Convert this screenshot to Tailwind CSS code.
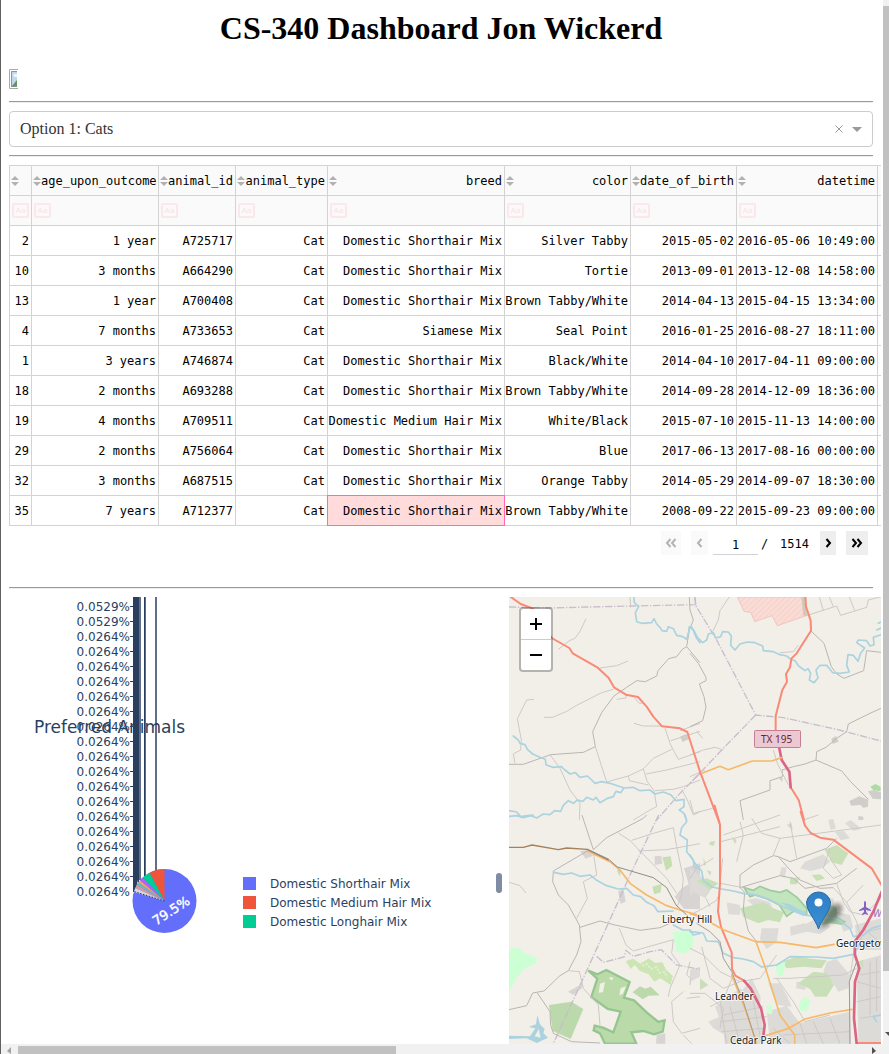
<!DOCTYPE html>
<html lang="en">
<head>
<meta charset="utf-8">
<meta name="viewport" content="width=device-width, initial-scale=1">
<title>CS-340 Dashboard</title>
<script src="https://cdn.jsdelivr.net/npm/@tailwindcss/browser@4"></script>
</head>
<body class="flex min-h-screen flex-col overflow-hidden border-l border-[#606060] bg-white font-['Liberation_Serif',serif] text-black">
<svg class="hidden">
  <symbol id="sort" viewBox="0 0 8 10"><path d="M4 0 8 4H0ZM0 6H8L4 10Z" fill="#b1b1b1"/></symbol>
</svg>
<div class="flex flex-1">
  <main class="flex min-w-0 flex-1 flex-col pl-2 pr-[10px]">
    <h1 class="mt-[10px] text-center text-[32px] leading-9 font-bold">CS-340 Dashboard Jon Wickerd</h1>
    <a href="#" aria-label="Home" class="mt-[23px] block w-[9px]">
      <svg width="9" height="20" viewBox="0 0 9 20"><path d="M9 .5H.5V19.500H9" fill="none" stroke="#a9a9a9"/><path d="M2 2H8V18H2Z" fill="#bfd7f1"/><path d="M2.500 18V2.500H8" fill="none" stroke="#8d969f"/><path d="M4 5h4v3H5z" fill="#edf5fc"/><path d="M3 17 8 11V17Z" fill="#5d9a4c"/><path d="M2 17.500H8" fill="none" stroke="#87938a"/></svg>
    </a>
    <hr class="mt-3 h-[2px] border-t border-b border-t-[#9a9a9a] border-b-[#eeeeee]">
    <div class="mt-2 flex h-9 items-center rounded border border-[#cccccc] pr-2 pl-[10px]">
      <button class="flex-1 text-left text-base leading-none text-[#333333]" aria-haspopup="listbox">Option 1: Cats</button>
      <button aria-label="Clear" class="mr-2 p-0"><svg width="10" height="10" viewBox="0 0 10 10"><path d="M1.500 1.500 8.500 8.500M8.500 1.500 1.500 8.500" stroke="#999" fill="none"/></svg></button>
      <button aria-label="Open" class="mr-[2px]"><svg width="10" height="5" viewBox="0 0 10 5"><path d="M0 0H10L5 5Z" fill="#999"/></svg></button>
    </div>
    <hr class="mt-2 h-[2px] border-t border-b border-t-[#9a9a9a] border-b-[#eeeeee]">
    <div class="mt-2 -mr-2 overflow-hidden">
      <table class="w-[996px] table-fixed border-collapse font-['DejaVu_Sans_Mono',monospace] text-[12px] leading-none whitespace-nowrap">
        <colgroup><col class="w-[22px]"><col class="w-[127px]"><col class="w-[77px]"><col class="w-[92px]"><col class="w-[177px]"><col class="w-[126px]"><col class="w-[106px]"><col class="w-[141px]"><col class="w-[128px]"></colgroup>
        <thead id="head" class="bg-[#fafafa]"></thead>
        <tbody id="rows"></tbody>
      </table>
    </div>
    <nav aria-label="Pages" class="mt-[5px] mr-[5px] flex h-6 items-center justify-end font-['DejaVu_Sans_Mono',monospace] text-[12px] leading-none">
      <button disabled aria-label="First page" class="mr-[10px] flex h-6 w-5 items-center justify-center bg-[#fafafa]"><svg width="12" height="10" viewBox="0 0 12 10"><path d="M5.500 1 2 5 5.500 9M10.500 1 7 5 10.500 9" fill="none" stroke="#b3b3b3" stroke-width="2"/></svg></button>
      <button disabled aria-label="Previous page" class="mr-[5px] flex h-6 w-[17px] items-center justify-center bg-[#fafafa]"><svg width="7" height="10" viewBox="0 0 7 10"><path d="M5.500 1 2 5 5.500 9" fill="none" stroke="#b3b3b3" stroke-width="2"/></svg></button>
      <input aria-label="Page" value="1" class="h-6 w-[45px] border-b border-[#d3d3d3] pt-[5px] text-center outline-none">
      <span class="ml-[3px] w-[19px] pt-[2px]">/</span><span class="mr-[11px] pt-[2px]">1514</span>
      <button aria-label="Next page" class="mr-[10px] flex h-6 w-4 items-center justify-center bg-[#eeeeee]"><svg width="7" height="10" viewBox="0 0 7 10"><path d="M1.500 1 5 5 1.500 9" fill="none" stroke="#000" stroke-width="2"/></svg></button>
      <button aria-label="Last page" class="flex h-6 w-[22px] items-center justify-center bg-[#eeeeee]"><svg width="12" height="10" viewBox="0 0 12 10"><path d="M1.500 1 5 5 1.500 9M6.500 1 10 5 6.500 9" fill="none" stroke="#000" stroke-width="2"/></svg></button>
    </nav>
    <hr class="mt-8 h-[2px] border-t border-b border-t-[#9a9a9a] border-b-[#eeeeee]">
    <div class="mt-2 -mr-2 flex flex-1">
      <section class="w-[500px] shrink-0" aria-label="Preferred Animals">
        <svg width="500" height="447" viewBox="9 597 500 447" class="font-['DejaVu_Sans',sans-serif]" fill="#2a3f5f">
          <g id="ticks" font-size="12" text-anchor="end"></g>
          <path d="M133 597H138V880L135 892H133Z"/>
          <path d="M140 597V880M145 597V876M156 597V871" fill="none" stroke="#5f6f87" stroke-width="2"/>
          <path d="M138.500 597V882M144.500 597V876" fill="none" stroke="#2a3f5f" stroke-width="1"/>
          <circle cx="164.500" cy="901" r="32" fill="#636efa"/>
          <path d="M164.500 901V869A32 32 0 0 0 149.500 872.700Z" fill="#ef553b"/>
          <path d="M164.500 901 149.500 872.700A32 32 0 0 0 142.700 877.600Z" fill="#00cc96"/>
          <path d="M164.500 901 142.700 877.600 140 880.400Z" fill="#ab63fa"/>
          <path d="M164.500 901 140 880.400 138.300 882.600Z" fill="#ffa15a"/>
          <path d="M164.500 901 138.300 882.600 136.800 885Z" fill="#6fb5c5"/>
          <path d="M164.500 901 136.800 885 135.300 888Z" fill="#d29a9a"/>
          <path d="M164.500 901 135.300 888 133.800 892.100Z" fill="#d9d3dd"/>
          <path d="M164.500 901 134 891.500" stroke="#2a3f5f" stroke-dasharray="1.500 1.500"/>
          <text x="0" y="0" transform="translate(173.500 914.500) rotate(-33)" font-size="13" text-anchor="middle" fill="#fff" stroke="#fff" stroke-width=".4">79.5%</text>
          <text x="34" y="733" font-size="17">Preferred Animals</text>
          <path d="M243 877h13v13h-13z" fill="#636efa"/><path d="M243 896h13v13h-13z" fill="#ef553b"/><path d="M243 915h13v13h-13z" fill="#00cc96"/>
          <g font-size="12"><text x="270" y="888">Domestic Shorthair Mix</text><text x="270" y="907">Domestic Medium Hair Mix</text><text x="270" y="926">Domestic Longhair Mix</text></g>
          <rect x="496" y="873" width="6" height="20" rx="3" fill="#808ba4"/>
        </svg>
      </section>
      <section class="relative h-[447px] min-w-0 flex-1 overflow-hidden bg-[#f2efe9]" aria-label="Map">
        <svg class="block size-full font-['Noto_Sans',sans-serif]" viewBox="509 597 372 447" preserveAspectRatio="xMinYMin slice">
          <defs><pattern id="hatch" width="12" height="12" patternUnits="userSpaceOnUse" patternTransform="rotate(45)"><path d="M0 0V12" stroke="#f5c6bf" stroke-width="3"/></pattern>
          <linearGradient id="pin" x1="0" y1="0" x2="0" y2="1"><stop offset="0" stop-color="#2e7fc6"/><stop offset="1" stop-color="#3b8fd2"/></linearGradient>
          <filter id="soft"><feGaussianBlur stdDeviation="2"/></filter></defs>
          <!-- land cover -->
          <g transform="translate(690 590) scale(.33333)">
            <path d="M142 21H342L346 78 262 107 246 77 194 95 183 68 162 64Z" fill="#f8dcd5"/><path d="M142 21H342L346 78 262 107 246 77 194 95 183 68 162 64Z" fill="url(#hatch)" stroke="#f2b5ae" stroke-width="2"/>
            <path d="M334 21H346L351 76 340 79Z" fill="#cfcab8"/>
            <path d="M478 633 508 619 535 629 534 650 520 654 512 645 483 647ZM534 604 552 600 573 607V628L548 626ZM505 678 520 680V690H505ZM424 446 438 438 446 455 428 462ZM266 560 278 565 276 577Z" fill="#d0cecb"/>
            <path d="M541 590 556 582 572 590V604L550 600Z" fill="#addba2"/>
          </g>
          <path transform="translate(500 590) scale(.33333)" d="M540 440 558 432 568 446 548 456Z" fill="#d0cecb"/>
          <g transform="translate(500 815) scale(.33333)">
            <path d="M27 401 54 397 70 411 113 431 108 445 72 462 50 490 27 530Z" fill="#cdffd5"/>
            <path d="M518 352 576 345 580 368 578 400 552 416 528 410Z" fill="#cdffd5"/>
            <path d="M147 570 214 560 250 582 212 672 158 648Z" fill="#bbd9ab"/>
            <path d="M265 467 292 478 319 465 389 501 372 548 402 556 440 592 475 621 494 616 488 650 462 658 430 648 394 652 409 686H315L300 655 281 646 284 632 309 638 340 652 362 590 323 582 274 546 292 491Z" fill="#badaaa" stroke="#96c68f" stroke-width="7"/>
            <path d="M300 506 315 501 309 532 296 533ZM362 519 378 514 369 536 358 541ZM330 486l10 3-3 7-9-4Z" fill="#eef1e4"/>
            <path d="M398 532 420 514 436 521 452 515 479 541 446 542 428 553Z" fill="#bbd9ab"/>
            <path d="M377 438 400 431 421 446 446 430 466 444 487 441 497 463 519 483 512 510 481 490 463 500 446 478 420 468 404 450 392 462Z" fill="#cbe6b4"/>
            <path d="M420 440 430 452 440 446 452 462 470 456 478 474 494 470 500 488" fill="none" stroke="#e6eed6" stroke-width="5" stroke-dasharray="7 5"/>
            <path d="M487 127 512 124 517 152 498 167ZM457 215 485 207 482 232 463 238ZM350 165 363 163 360 185Z" fill="#c5dfb2"/>
            <path d="M552 160 600 145V282H552L524 245 545 220 566 208ZM464 124 484 122 487 146 464 150ZM354 230 370 220 377 260 362 266ZM204 530 236 512 246 502 246 520 220 540ZM240 109 260 105 280 122 257 131ZM470 660 496 655V686H468Z" fill="#d9d4d4"/>
          </g>
          <g transform="translate(690 815) scale(.33333)">
            <g fill="#dddbd7">
              <path d="M0 160 22 176 50 196 62 225 46 250 10 230 0 245ZM415 15 430 12 438 40 422 46ZM465 25 482 15 515 42 490 48ZM435 50 462 48 480 70 452 76ZM345 140 400 118 420 140 395 160 362 168 330 160ZM275 156 290 158 284 188 268 180ZM110 262 150 270 150 300 115 298ZM170 255 200 250 240 262 250 285 220 280 195 275ZM300 335 345 324 349 350 302 362ZM345 328 400 300 420 336 390 358 340 348ZM215 340 266 340 260 380 230 402 210 372ZM360 245 430 250 440 310 400 330ZM410 440 440 432 480 480 475 520 445 530 430 505 400 470ZM235 505 268 505 290 540 305 575 262 570ZM320 500 350 505 345 525 318 520Z"/>
              <path d="M75 575 150 520 190 560 215 600 222 686H104L100 640ZM150 535 185 490 212 545 208 600ZM230 590 290 572 330 625 480 590V686H240ZM500 440 573 420V686H505ZM440 290 480 300 490 340 460 350ZM495 330 573 310V405H500ZM0 465 30 455 30 485 0 500ZM55 620 100 600 105 660 70 640Z"/>
            </g>
            <g fill="#c9dfb7"><path d="M404 104 440 90 475 115 455 150 425 142ZM150 280 190 270 220 262 250 280 282 292 270 322 235 315 205 325 160 306ZM275 440 320 425 370 432 410 436 395 460 340 455 290 460ZM325 505 370 470 412 475 432 510 410 545 375 545 360 522ZM20 196 50 190 85 205 60 225ZM300 190 330 186 320 208 300 208ZM505 440 520 435 520 460ZM30 490 55 510 30 525Z"/></g>
            <path d="M256 446 286 440 280 480 262 486ZM326 566 345 543 362 560 350 590 330 586ZM230 570 248 568 246 598 230 595Z" fill="#cdffd5"/>
            <path d="M162 218 190 226 210 214 240 226 270 232 290 225 322 248 350 280 350 298 318 284 290 304 268 270 232 252 196 240 180 245Z" fill="#c2e5bd" stroke="#9fcaa1" stroke-width="5"/>
            <path d="M405 262 440 278 442 305 470 320 455 330 420 325 395 330Z" fill="#a7cca7"/>
            <path d="M272 262 300 268 325 282 350 292 345 304 315 292Z" fill="#a9d5db"/>
            <path d="M60 80 75 78 72 92 58 90ZM125 66 140 75 135 88ZM40 125 48 150 42 152ZM290 30 305 25 308 45ZM365 180 390 178 405 190 380 198ZM50 165 64 170 60 182Z" fill="#c9dfb7"/>
          </g>
          <!-- administrative boundaries -->
          <g fill="none" stroke="#c9bccd" stroke-width="4" stroke-dasharray="22 5 4 5">
            <path transform="translate(500 590) scale(.33333)" d="M27 51 140 54 400 48 587 44M600 550 540 610 470 690M587 44 585 21"/>
            <path transform="translate(690 590) scale(.33333)" d="M14 21 18 48 80 150 197 375 280 383 440 418 573 453M197 375 100 475 0 580"/>
            <path transform="translate(500 815) scale(.33333)" d="M476 0 390 180 325 325 245 500 158 690M290 424 310 442 372 426 378 406 400 424 450 410 484 404 530 450 600 463"/>
          </g>
          <!-- minor roads -->
          <g fill="none" stroke="#cdc9c6" stroke-width="3" stroke-linejoin="round">
            <g transform="translate(500 590) scale(.33333)">
              <path stroke="#bab5b4" d="M27 523 70 523 152 494 250 487 286 470 278 425 305 368 342 318 380 292 410 272 436 275 470 258 474 242 506 206 530 200 548 177 560 170 568 120 580 90 570 60 568 21M560 170 600 218"/>
              <path d="M258 86 240 124 225 145 208 152 175 178M384 213 350 227 300 234M340 298 305 308 230 346 200 364 158 382 132 382M102 328 80 330 52 386 64 450 62 480 40 492 45 520M286 470 320 576M150 494 180 535 210 600 240 640 238 690M402 400 430 408 490 408M495 415 512 465 535 508 600 485M512 452 600 424M320 576 385 558 430 537 460 505 515 478M430 537 442 575 462 602 470 650 450 660 400 690M438 552 500 540 600 515M385 558 388 572 445 585M465 602 520 598 550 590 600 570M545 598 562 630 580 675 600 665M540 422 600 400M404 324 418 340 426 340M350 328 378 324 378 312M390 21 392 52"/>
            </g>
            <g transform="translate(690 590) scale(.33333)">
              <path stroke="#bab5b4" d="M362 122 402 160 424 230 440 252 462 265 521 242 530 182 573 187M0 190 25 220 48 262 48 272 28 282 42 320 48 352 38 392 0 410M573 355 540 370 530 375 475 402 470 425 440 445 408 472 380 485 378 510 345 522 310 530 276 540M378 510 455 543 482 575 535 628M276 540 278 560 240 572 240 600 150 632 160 690"/>
              <path d="M118 21 90 62 85 90 68 125M270 188 310 185 325 165M346 78 440 48 452 76 530 52 535 30 573 20M400 62 388 21M430 50 418 21M495 64 478 21M0 495 40 480 75 472 100 480M0 630 10 670 68 655M250 480 262 520 295 585M340 690 385 675M0 560 45 540M20 424 38 445"/>
            </g>
            <g transform="translate(500 815) scale(.33333)">
              <path stroke="#bab5b4" d="M27 584 80 572 98 534 132 528 180 482 205 467 230 420 243 380 238 330 205 270 175 240 158 200 160 168 262 108M240 337 300 318 345 330 420 346 480 338 510 325M112 534 150 590 152 630 160 655 215 680 300 684M246 0 280 104 320 68 430 10 440 0"/>
              <path d="M355 54 392 78 420 108 500 190 530 235M395 76 460 55 520 38 530 95 550 190 545 240 530 280M280 110 290 180 250 200 262 250 230 310M27 202 60 212 78 234M358 340 378 390 400 408 520 374M520 374 515 415 540 450 510 520 505 545M205 467 238 470 250 520 295 570 300 630M550 530 515 560 520 620 545 655 600 640M415 108 500 104 600 86M570 440 560 480 572 490 570 510M560 550 600 545M550 660 575 686"/>
            </g>
            <g transform="translate(690 815) scale(.33333)">
              <path stroke="#bab5b4" d="M150 218 150 180 190 150 250 122 265 125 300 140 410 100 440 70M150 218 164 232 160 285 175 348 200 380M150 218 210 200 270 182 310 190 345 220 440 205 500 160M265 125 300 165 330 195 390 220 430 218"/>
              <path d="M100 60 190 28 270 0M185 10 215 55 270 70 573 30M92 80 270 35M250 120 270 70M98 130 90 205 150 216M140 140 160 60 150 20M300 20 320 130M0 190 20 160 70 130M0 300 40 280 80 256 84 245M48 250 60 275M0 400 40 420 90 470 150 500 210 490 260 420M130 480 100 555 60 575M35 395 60 490 100 520 150 500M430 218 470 262 500 320 520 400M440 205 460 260 480 290 520 300 573 250M470 262 520 210M250 490 300 490 460 480 500 460M0 535 45 535 100 580 90 640M260 490 310 560 345 620 420 600M480 686 478 500 495 390 530 350 573 340M500 500 573 520M500 560 573 545M510 610 573 600M510 480 570 470M540 440V600M560 430V590M100 600 220 575M90 620 230 605M95 650 220 640M120 575 150 686M90 555 110 686M190 560 215 686M510 380 573 390M520 340 573 385M250 640 300 686M330 625 350 686M370 620 400 686M420 610 450 686M280 660 480 650M420 130 440 160 455 180 430 190 400 160 420 100"/>
            </g>
          </g>
          <!-- water -->
          <g fill="none" stroke="#aad3df" stroke-width="5" stroke-linejoin="round" stroke-linecap="round">
            <path transform="translate(500 590) scale(.33333)" d="M402 21 403 38 416 50 406 68 410 95 425 100 455 98 462 86 470 102 480 112 486 122 500 124 505 110 520 116 530 136 548 140 560 148 566 125 568 110 576 112 590 145 600 158M40 438 55 450 60 460 75 464 82 478 98 492 120 502 136 508 138 524 158 532 184 530 195 540 210 552 226 548 240 562 262 558 275 570 285 580 305 575 330 580 348 586 372 594 400 592 420 602 450 600 465 612 490 606 512 614 528 632 552 628 552 650 538 660 552 670 560 690M27 662 50 666 62 680 90 676 110 684 130 672 150 674 164 662 182 664 190 646 205 632 220 640 232 630 248 634 260 622 280 630 288 622 300 638 320 626 340 620 348 604 362 608 372 594"/>
            <path transform="translate(690 590) scale(.33333)" d="M0 112 12 122 22 142 38 158 50 150 55 132 70 128 78 144 92 140 98 125 115 126 124 138 122 166 135 180 150 162 172 156 195 158 218 168 220 182 250 185 270 194 290 198 300 206 315 212 326 228 345 242 354 236 362 250 358 270 372 278 384 264 378 240 390 226 410 226 428 248 450 250 478 246 470 226 474 194 490 196 504 214 512 190 524 174 500 158 505 150 530 152 540 168 552 164 550 142 573 134M565 100 573 96M560 120 573 114"/>
            <path transform="translate(500 815) scale(.33333)" d="M27 4 50 2 70 8 100 0M555 0 560 20 545 38 540 60 562 75 560 110 580 135 582 156 600 162M162 172 190 178 215 174 240 184 270 180 290 196 320 212 355 222 380 220 400 240 422 245 440 262 462 272 474 290 520 288M520 330 548 345 570 345 580 360 600 355"/>
            <path transform="translate(690 815) scale(.33333)" d="M0 120 15 145 35 168 40 196 65 216 95 222 130 228 162 236 190 238 230 250 280 275 340 300 440 310 480 340 490 365 520 360 545 340 573 332M0 350 40 354 50 378 85 380 100 415 130 428 160 432 190 440 215 456 260 450 300 425 380 426 430 430 490 418 510 385M573 600 550 605 560 620"/>
          </g>
          <path transform="translate(500 815) scale(.33333)" d="M27 662 90 664 106 640 86 636 108 628 112 600 120 628 134 642 130 654 144 668 110 684 80 670 27 672ZM104 664 122 668 116 642Z" fill="#aad3df"/>
          <!-- highways -->
          <g fill="none" stroke-linejoin="round" stroke-linecap="round">
            <g stroke="#f98a76" stroke-width="6">
              <path transform="translate(500 590) scale(.33333)" d="M27 17 62 42 98 55 155 144 208 174 218 190 292 232 326 264 342 292 378 314 414 321 440 350 460 380 486 409 540 415 562 426 600 545 658 698"/>
              <path transform="translate(690 590) scale(.33333)" d="M346 17 348 50 362 92 363 122 320 190 304 206 300 232 288 252 291 275 277 300 257 378 257 422M302 592 326 630 342 690"/>
              <path transform="translate(690 815) scale(.33333)" d="M74 -28 90 30 90 205 84 290 93 336 125 412 126 462 136 482 162 497M332 -10 345 32 362 54 390 68 430 74 545 160 573 208M500 684H573"/>
            </g>
            <g stroke="#dc6485" stroke-width="8">
              <path transform="translate(690 590) scale(.33333)" d="M267 470 275 510 298 545 302 592"/>
              <path transform="translate(690 815) scale(.33333)" d="M162 497 182 520 213 580 224 630 220 664M575 230 550 290 520 345 494 380 495 420 508 460 495 500 492 610 500 686"/>
            </g>
            <g stroke="#f8b869" stroke-width="5">
              <path transform="translate(690 590) scale(.33333)" d="M38 549 90 529 115 539 187 513 245 513 275 503"/>
              <path transform="translate(500 815) scale(.33333)" d="M262 108 330 140 360 165 390 205 440 240 500 272 540 285 600 302"/>
              <path transform="translate(690 815) scale(.33333)" d="M0 294 60 322 100 344 198 380 270 382 378 398 432 388M198 380 225 455 270 600 296 636 314 660V686M220 664 296 640 345 612 420 594 486 583M125 480 165 580 200 686"/>
            </g>
            <path transform="translate(500 815) scale(.33333)" d="M27 97 70 97 96 90 175 104 200 99 262 103 325 135" stroke="#a5825a" stroke-width="4"/>
            <path transform="translate(500 815) scale(.33333)" d="M262 103 325 132 352 156 460 188 500 218 528 270 560 300" stroke="#908c89" stroke-width="3"/>
            <path transform="translate(690 815) scale(.33333)" d="M20 325 60 350 90 380 100 430 125 470 160 560 200 686M480 686 478 500 500 440" stroke="#a39c97" stroke-width="3"/>
          </g>
          <!-- labels -->
          <rect x="754.500" y="730.500" width="46" height="17" rx="1" fill="#ecc9d2" stroke="#c38094"/>
          <text x="761" y="743" font-size="10" fill="#6b2238">TX 195</text>
          <g font-size="10" fill="#222" stroke="#fff" stroke-opacity=".7" stroke-width="2" paint-order="stroke" stroke-linejoin="round">
            <text x="662" y="923">Liberty Hill</text><text x="836" y="947">Georgetown</text><text x="715" y="1000">Leander</text><text x="730" y="1044">Cedar Park</text>
          </g>
          <path transform="translate(865 908)" d="M0-7C1-7 1-5 1-3V-1L6 2V3L1 2V4L3 6V7L0 6-3 7V6L-1 4V2L-6 3V2L-1-1V-3C-1-5-1-7 0-7" fill="#8461c4"/>
          <text x="873" y="917" font-size="10" font-style="italic" fill="#9471bd">W</text>
          <path d="M820 929C826 908 836 899 841 905S835 922 820 929" fill="#333" opacity=".5" filter="url(#soft)"/>
          <path d="M818.500 929C815 918 806.500 912 806.500 902A12.200 12.200 0 0 1 830.500 902C830.500 912 822 918 818.500 929Z" fill="url(#pin)" stroke="#2768a4"/>
          <circle cx="818.500" cy="902.500" r="4" fill="#fff"/>
        </svg>
        <div class="absolute top-[10px] left-[10px] flex w-[34px] flex-col rounded border-2 border-black/25 bg-white bg-clip-padding">
          <button aria-label="Zoom in" class="flex h-[31px] items-center justify-center border-b border-[#ccc]"><svg width="12" height="12" viewBox="0 0 12 12"><path d="M0 6H12M6 0V12" stroke="#000" stroke-width="2"/></svg></button>
          <button aria-label="Zoom out" class="flex h-[30px] items-center justify-center"><svg width="12" height="12" viewBox="0 0 12 12"><path d="M0 6H12" stroke="#000" stroke-width="2"/></svg></button>
        </div>
      </section>
    </div>
  </main>
  <div class="flex w-[6px] shrink-0 flex-col bg-[#f1f1f1]" aria-hidden="true">
    <div class="mt-[6px] h-[965px] bg-[#c1c1c1]"></div>
    <svg class="mt-[61px]" width="6" height="5" viewBox="0 0 6 5"><path d="M2 0H10L6 4Z" fill="#505050"/></svg>
  </div>
</div>
<div class="flex h-[10px] items-end bg-[#f1f1f1]" aria-hidden="true">
  <svg class="ml-[6px]" width="4" height="7" viewBox="0 0 4 7"><path d="M4 0V7L0 4Z" fill="#a3a3a3"/></svg>
  <div class="ml-[7px] h-2 w-[378px] bg-[#c1c1c1]"></div>
  <svg class="mr-[13px] ml-auto" width="4" height="7" viewBox="0 0 4 7"><path d="M0 0V7L4 4Z" fill="#505050"/></svg>
</div>
<script>
const columns = ['', 'age_upon_outcome', 'animal_id', 'animal_type', 'breed', 'color', 'date_of_birth', 'datetime', ''];
const data = [
 ['2','1 year','A725717','Cat','Domestic Shorthair Mix','Silver Tabby','2015-05-02','2016-05-06 10:49:00'],
 ['10','3 months','A664290','Cat','Domestic Shorthair Mix','Tortie','2013-09-01','2013-12-08 14:58:00'],
 ['13','1 year','A700408','Cat','Domestic Shorthair Mix','Brown Tabby/White','2014-04-13','2015-04-15 13:34:00'],
 ['4','7 months','A733653','Cat','Siamese Mix','Seal Point','2016-01-25','2016-08-27 18:11:00'],
 ['1','3 years','A746874','Cat','Domestic Shorthair Mix','Black/White','2014-04-10','2017-04-11 09:00:00'],
 ['18','2 months','A693288','Cat','Domestic Shorthair Mix','Brown Tabby/White','2014-09-28','2014-12-09 18:36:00'],
 ['19','4 months','A709511','Cat','Domestic Medium Hair Mix','White/Black','2015-07-10','2015-11-13 14:00:00'],
 ['29','2 months','A756064','Cat','Domestic Shorthair Mix','Blue','2017-06-13','2017-08-16 00:00:00'],
 ['32','3 months','A687515','Cat','Domestic Shorthair Mix','Orange Tabby','2014-05-29','2014-09-07 18:30:00'],
 ['35','7 years','A712377','Cat','Domestic Shorthair Mix','Brown Tabby/White','2008-09-22','2015-09-23 09:00:00']
];
document.getElementById('head').innerHTML =
 '<tr class="h-[30px]">' + columns.map((c, i) => `<th scope="col" class="border border-[#d3d3d3] p-0 pr-[2px] font-normal"><div class="flex items-center justify-between pl-[1px]">${i < 8 ? `<button aria-label="Sort ${c}"><svg class="block" width="8" height="10"><use href="#sort"/></svg></button>` : ''}<span>${c}</span></div></th>`).join('') + '</tr>' +
 '<tr class="h-[30px]">' + columns.map((c, i) => `<td class="border border-[#d3d3d3] p-0"><div class="flex items-center pl-[2px]">${i < 8 ? `<button aria-label="Case sensitivity ${c}" class="h-[15px] w-[17px] shrink-0 rounded-xs border-2 border-[#fce8ea] font-['Liberation_Sans',sans-serif] text-[8px] leading-none text-[#fbe3e6]">Aa</button><input aria-label="Filter ${c}" class="w-0 min-w-0 flex-1 outline-none">` : ''}</div></td>`).join('') + '</tr>';
document.getElementById('rows').innerHTML = data.map((r, y) => '<tr class="h-[30px]">' + [...r, ''].map((v, x) =>
 `<td class="${y === 9 && x === 4 ? 'border border-[#ff69b4] border-double bg-[#ffdcdb]' : 'border border-[#d3d3d3]'} p-0 pr-[2px] text-right">${v}</td>`).join('') + '</tr>').join('');
document.getElementById('ticks').innerHTML = Array.from({length: 20}, (_, i) =>
 `<text x="130" y="${611 + 15 * i}">${i < 2 ? '0.0529%' : '0.0264%'}</text>` + (i < 19 ? `<path d="M130 ${606 + 15 * i}h3v1h-3z"/>` : '')).join('');
</script>
</body>
</html>
